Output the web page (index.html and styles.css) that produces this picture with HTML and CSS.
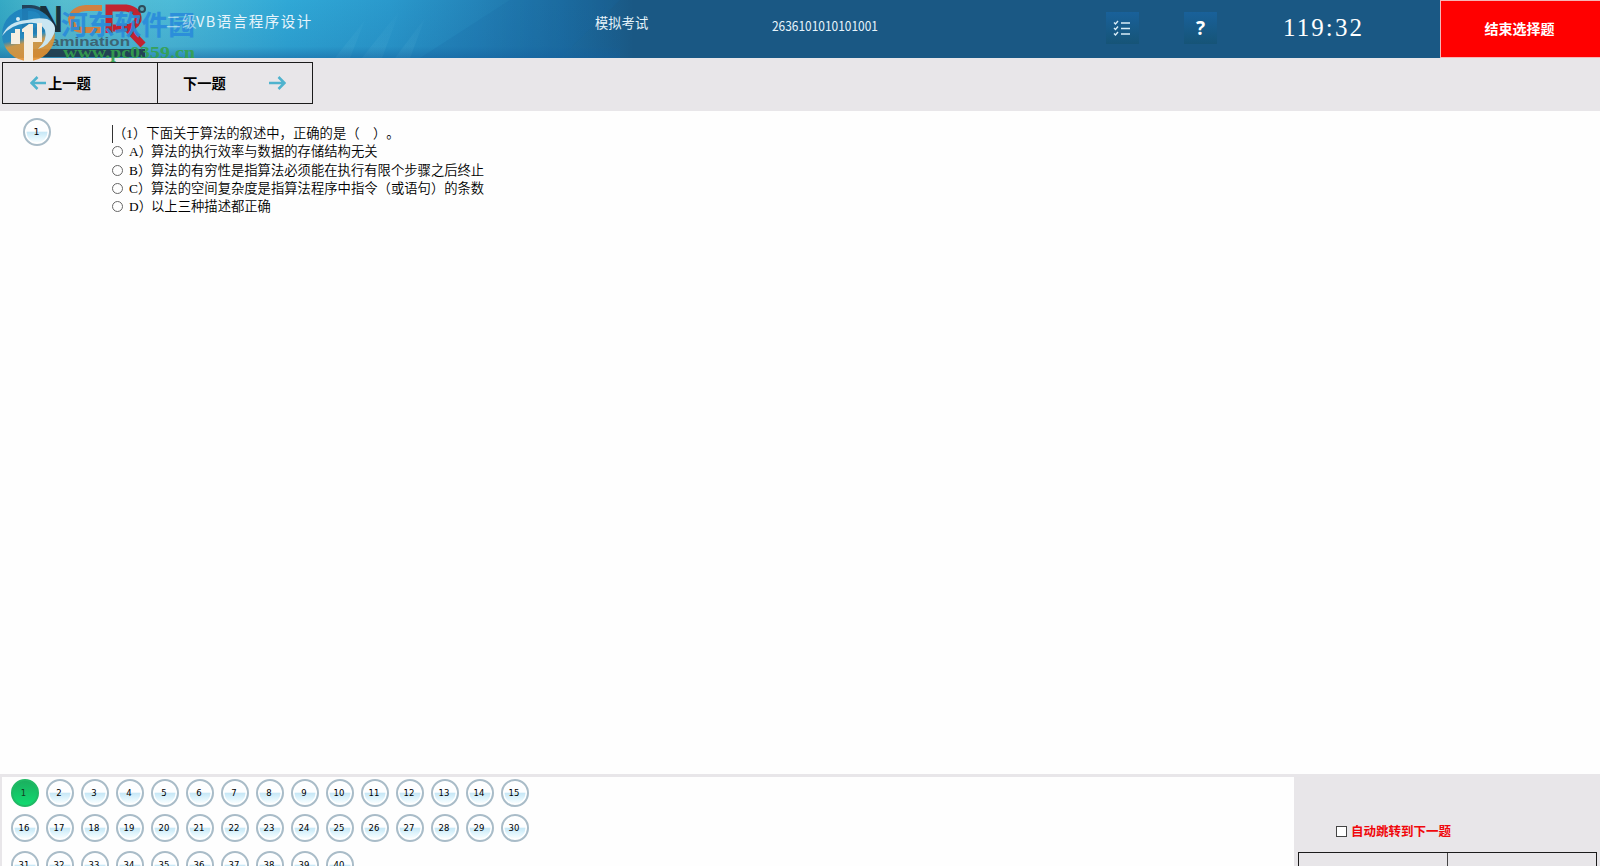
FILE: index.html
```html
<!DOCTYPE html>
<html lang="zh-CN">
<head>
<meta charset="utf-8">
<title>模拟考试</title>
<link rel="stylesheet" href="styles.css">
</head>
<body>
<div class="app">
  <header class="header">
    <svg class="banner" width="1440" height="58" viewBox="0 0 1440 58">
      <defs>
        <linearGradient id="sky" x1="0" x2="1" y1="0" y2="0">
          <stop offset="0" stop-color="#35a9c4"/>
          <stop offset=".045" stop-color="#57bdcf"/>
          <stop offset=".12" stop-color="#4dbbd8"/>
          <stop offset=".2" stop-color="#30a8d6"/>
          <stop offset=".27" stop-color="#2a99cc"/>
          <stop offset=".33" stop-color="#2484b9"/>
          <stop offset=".39" stop-color="#1c6c9f"/>
          <stop offset=".44" stop-color="#1a5884"/>
          <stop offset="1" stop-color="#1a5884"/>
        </linearGradient>
        <linearGradient id="shade" x1="0" x2="0" y1="0" y2="1">
          <stop offset="0" stop-color="#145f9c" stop-opacity="0"/>
          <stop offset=".8" stop-color="#145f9c" stop-opacity=".15"/>
          <stop offset="1" stop-color="#145f9c" stop-opacity=".55"/>
        </linearGradient>
        <linearGradient id="ray" x1="0" x2="0" y1="0" y2="1">
          <stop offset="0" stop-color="#8fe0f0" stop-opacity="0"/>
          <stop offset="1" stop-color="#8fe0f0" stop-opacity=".12"/>
        </linearGradient>
        <linearGradient id="orb" x1=".3" x2=".55" y1="0" y2="1">
          <stop offset="0" stop-color="#1b80be"/>
          <stop offset=".55" stop-color="#2587be"/>
          <stop offset=".66" stop-color="#d9963f"/>
          <stop offset="1" stop-color="#e8912c"/>
        </linearGradient>
      </defs>
      <rect width="1440" height="58" fill="url(#sky)"/>
      <path d="M510 0H620L560 58H420Z" fill="#1a69a3" opacity=".2"/>
      <path d="M365 20L335 58H350ZM400 10L362 58H382ZM425 18L395 58H410Z" fill="url(#ray)"/>
      <rect width="620" height="58" fill="url(#shade)"/>
      <g class="logo">
        <rect x="33" y="49" width="112" height="8" fill="#203a4a"/>
        <path d="M25 8H31Q44 9 44 20T31 31H25Z" fill="none" stroke="#20374f" stroke-width="6"/>
        <text class="logo-letter" x="38" y="32" textLength="25" lengthAdjust="spacingAndGlyphs" fill="#14232d">N</text>
        <path d="M102 8H86Q73 9 71 19Q72 30 83 30H101" fill="none" stroke="#df7b32" stroke-width="6"/>
        <path d="M109 33V8H126Q139 10 138 20Q135 28 124 28H113M126 27L143 45" fill="none" stroke="#cf1420" stroke-width="7"/>
        <circle cx="142" cy="9" r="3" fill="#59a6b8" stroke="#29414d" stroke-width="2"/>
        <text class="logo-caption" x="50" y="46" textLength="80" lengthAdjust="spacingAndGlyphs">amination</text>
      </g>
      <circle cx="28.500" cy="34.500" r="26.500" fill="url(#orb)" opacity=".9"/>
      <path d="M2 36Q8 21 27 20Q38 17 47 19Q58 24 54 34Q49 46 38 49Q48 40 45 30Q40 21 27 23Q10 25 2 36Z" fill="#c9e6f2"/>
      <path d="M11 41V33H15V29H20V44H11ZM24 61V32H22V29L29 24H33V61ZM33 42H42V23H37V38H33Z" fill="#f5eee1"/>
      <circle cx="18" cy="19" r="2" fill="#d8edf4"/>
      <text class="mark-name" x="61" y="34.500" textLength="134" lengthAdjust="spacingAndGlyphs">河东软件园</text>
      <text class="mark-url" x="63" y="58" textLength="132" lengthAdjust="spacingAndGlyphs">www.pc0359.cn</text>
    </svg>
    <div class="header-row">
      <h1 class="subject"><span class="level">二级</span>VB语言程序设计</h1>
      <span class="exam-name">模拟考试</span>
      <span class="ticket"><svg width="110" height="24"><text x="0" y="15" textLength="106" lengthAdjust="spacingAndGlyphs">2636101010101001</text></svg></span>
      <button class="tool" aria-label="list">
        <svg width="32" height="32" viewBox="0 0 32 32" fill="none" stroke="#d9edf8" stroke-width="1.4"><path d="M15 11H24M15 16.5H24M15 22H24"/><path d="M8 10.500L9.500 12L12 9M8 16L9.500 17.500L12 14.500M8 21.500L9.500 23L12 20"/></svg>
      </button>
      <button class="tool help" aria-label="help">?</button>
      <time class="clock"><svg width="84" height="40"><text x="0" y="30" textLength="79" lengthAdjust="spacing">119:32</text></svg></time>
      <button class="finish">结束选择题</button>
    </div>
  </header>
  <nav class="toolbar">
    <button class="step prev"><svg width="17" height="14" viewBox="0 0 17 14"><path d="M16 7H2M7.500 1L1.500 7L7.500 13"/></svg>上一题</button>
    <button class="step next">下一题<svg width="17" height="14" viewBox="0 0 17 14"><path d="M0 7H15M9.500 1L15.500 7L9.500 13"/></svg></button>
  </nav>
  <main class="question">
    <span class="ball current">1</span>
    <div class="body">
      <p class="stem">（1）下面关于算法的叙述中，正确的是（&emsp;）。</p>
      <label class="option"><i></i><b>A）</b>算法的执行效率与数据的存储结构无关</label>
      <label class="option"><i></i><b>B）</b>算法的有穷性是指算法必须能在执行有限个步骤之后终止</label>
      <label class="option"><i></i><b>C）</b>算法的空间复杂度是指算法程序中指令（或语句）的条数</label>
      <label class="option"><i></i><b>D）</b>以上三种描述都正确</label>
    </div>
  </main>
  <footer class="footer">
    <div class="sheet">
      <span class="ball done">1</span><span class="ball">2</span><span class="ball">3</span><span class="ball">4</span><span class="ball">5</span><span class="ball">6</span><span class="ball">7</span><span class="ball">8</span><span class="ball">9</span><span class="ball">10</span><span class="ball">11</span><span class="ball">12</span><span class="ball">13</span><span class="ball">14</span><span class="ball">15</span>
      <span class="ball">16</span><span class="ball">17</span><span class="ball">18</span><span class="ball">19</span><span class="ball">20</span><span class="ball">21</span><span class="ball">22</span><span class="ball">23</span><span class="ball">24</span><span class="ball">25</span><span class="ball">26</span><span class="ball">27</span><span class="ball">28</span><span class="ball">29</span><span class="ball">30</span>
      <span class="ball">31</span><span class="ball">32</span><span class="ball">33</span><span class="ball">34</span><span class="ball">35</span><span class="ball">36</span><span class="ball">37</span><span class="ball">38</span><span class="ball">39</span><span class="ball">40</span>
    </div>
    <aside class="side">
      <label class="auto"><i></i>自动跳转到下一题</label>
      <div class="side-buttons"><span></span><span></span></div>
    </aside>
  </footer>
</div>
</body>
</html>
```
FILE: styles.css
```css
* { box-sizing: border-box; }
body { margin: 0; font-family: "Liberation Sans", "Noto Sans CJK SC", sans-serif; color: #000; overflow: hidden; }
button { font: inherit; border: 0; padding: 0; margin: 0; background: none; }
.app { height: 866px; display: grid; grid-template-rows: 58px 53px 663px 92px; background: #fefefe; overflow: hidden; }

.header { position: relative; background: #1a5884; z-index: 1; }
.banner { position: absolute; left: 0; top: 0; overflow: visible; }
.header-row { position: relative; display: grid; grid-template-columns: 166px 428px 178px 334px 78px 99px 157px 160px; height: 58px; color: #e6f4fb; }
.subject { grid-column: 2; margin: 0; padding-top: 10px; font: 400 15px/22px "Noto Sans CJK SC", sans-serif; letter-spacing: 1.500px; white-space: nowrap; }
.subject { word-spacing: 0; font-size: 14.500px; }
.level { opacity: .6; margin-right: -2px; }
.exam-name { padding-top: 12px; padding-left: 1px; font: 400 13.300px/21px "Noto Sans CJK SC", sans-serif; }
.ticket { padding-top: 16px; }
.ticket text { font: 13px "Noto Sans CJK SC", sans-serif; fill: #e6f4fb; }
.tool { width: 33px; height: 32px; margin-top: 12px; background: linear-gradient(#19619a, #165477); color: #fff; }
.tool svg { display: block; }
.help { font: 700 19px/32px "Noto Sans", sans-serif; }
.clock text { font: 25px "Liberation Serif", serif; fill: #fff; }
.clock { padding-top: 6px; }
.finish { height: 58px; background: #f00; border: 1px solid #f6b5b5; border-right: 0; color: #fff; font: 700 14px/54px "Noto Sans CJK SC", sans-serif; padding: 0 2px 2px 0; }

.logo { opacity: .9; }
.logo-letter { font: 700 36px "Liberation Sans", sans-serif; }
.logo-caption { font: 700 13px "Liberation Sans", sans-serif; fill: #3b5d6b; }
.mark-name { font: 700 27px "Noto Sans CJK SC", sans-serif; fill: #2a8bdb; opacity: .9; }
.mark-url { font: 700 17px "Liberation Serif", serif; fill: #35a14e; opacity: .9; }

.toolbar { background: #e8e6e9; padding: 4px 0 0 2px; display: flex; }
.step { height: 42px; border: 1px solid #1b1b1b; display: flex; align-items: center; font: 700 14.300px/40px "Noto Sans CJK SC", sans-serif; }
.step svg { fill: none; stroke: #4fb3ce; stroke-width: 2.500; }
.prev { width: 156px; padding-left: 27px; gap: 1px; }
.next { width: 156px; margin-left: -1px; padding-left: 25px; gap: 43px; }

.question { display: flex; }
.ball { width: 28px; height: 28px; border: 2px solid #a9bcc8; border-radius: 50%; background: linear-gradient(#fdfeff 0 47%, #c6e7f6 50%, #e3f6fd 75%, #fafeff 95%); font: 8.500px/24px "DejaVu Sans", sans-serif; text-align: center; padding-right: 2px; box-shadow: inset 0 0 0 1.500px #fff; }
.current { margin: 7px 0 0 23px; font-size: 9.500px; padding-right: 1px; }
.body { margin: 14px 0 0 60px; font: 350 13.333px/18.300px "Liberation Serif", "Noto Sans CJK SC", sans-serif; white-space: nowrap; text-spacing-trim: space-all; }
.stem { margin: 0 0 0 1px; height: 18.300px; border-left: 1px solid #333; }
.option { display: flex; align-items: center; height: 18.300px; }
.option i { width: 11px; height: 11px; border: 1px solid #666; border-radius: 50%; margin: 0 6px 1px 1px; }
.option b { font-weight: 350; width: 22px; }

.footer { display: flex; background: #e8e6e9; padding: 3px 0 0 2px; }
.sheet { width: 1292px; background: #fefefe; display: grid; grid-template-columns: repeat(15, 35px); grid-template-rows: 35px 37px 35px; padding: 2px 0 0 9px; height: 89px; }
.done { background: linear-gradient(#1bb05f, #10da70); border-color: #20b965; box-shadow: none; padding-right: 3px; color: #143d22; }
.side { flex: 1; padding: 44px 3px 0 4px; }
.auto { display: flex; align-items: center; height: 20px; color: #f0080c; font: 700 12.500px/20px "Noto Sans CJK SC", sans-serif; padding-left: 38px; gap: 4px; }
.auto i { width: 11px; height: 11px; border: 1px solid #444; background: #fff; }
.side-buttons { display: flex; margin-top: 11px; height: 42px; border: 1px solid #1b1b1b; }
.side-buttons span { flex: 1; }
.side-buttons span + span { border-left: 1px solid #444; }
```
